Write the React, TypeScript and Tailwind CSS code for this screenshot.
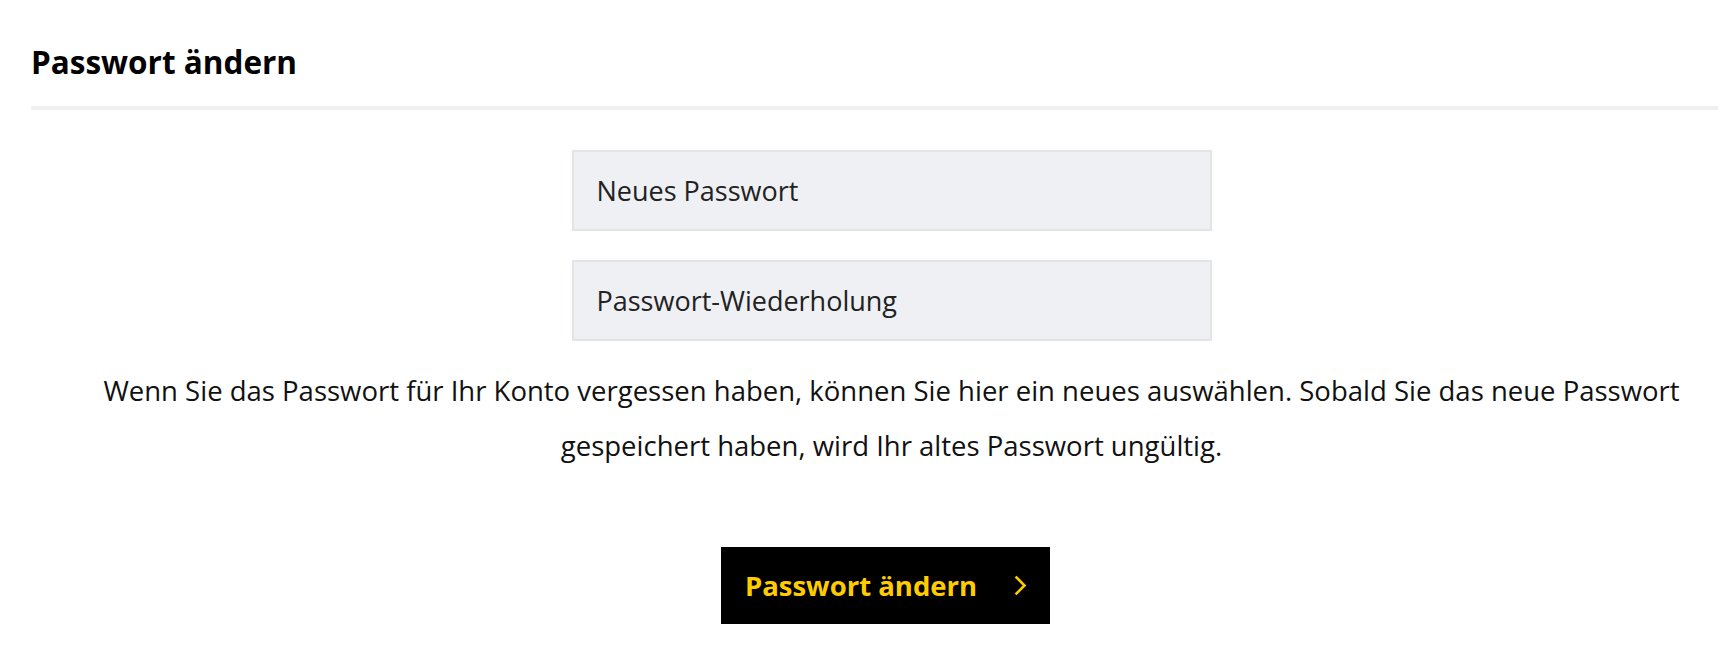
import { useState } from 'react'

function ChevronRight() {
  return (
    <svg width="13" height="21" viewBox="0 0 13 21" fill="none" className="shrink-0">
      <polyline points="2.5,2.5 10.5,10.5 2.5,18.5" stroke="#ffcc00" strokeWidth="2.6" strokeLinecap="square" />
    </svg>
  )
}

interface FieldProps {
  placeholder: string
  value: string
  onChange: (v: string) => void
}

function PasswordField({ placeholder, value, onChange }: FieldProps) {
  return (
    <input
      type="password"
      value={value}
      onChange={(e) => onChange(e.target.value)}
      placeholder={placeholder}
      className="w-[640px] h-[81px] px-[23px] bg-[#eff0f3] border-2 border-[#e3e4e6] text-[27px] text-[#222] placeholder:text-[#222] outline-none"
    />
  )
}

export default function App() {
  const [pw, setPw] = useState('')
  const [pwRepeat, setPwRepeat] = useState('')

  return (
    <div className="min-h-[653px] bg-white text-black" style={{ fontFamily: '"Open Sans", "Noto Sans", sans-serif' }}>
      {/* Header */}
      <div className="pl-[31px] pt-[47px]">
        <h1 className="text-[31.5px] leading-[30px] font-bold">Passwort ändern</h1>
        <div className="mt-[29px] h-[4px] bg-[#f0f0f2]" />
      </div>

      {/* Form */}
      <form className="pl-[65px] flex flex-col items-center" onSubmit={(e) => e.preventDefault()}>
        <div className="mt-[40px] flex flex-col gap-[29px]">
          <PasswordField placeholder="Neues Passwort" value={pw} onChange={setPw} />
          <PasswordField placeholder="Passwort-Wiederholung" value={pwRepeat} onChange={setPwRepeat} />
        </div>

        <p className="mt-[22px] text-center text-[27.5px] leading-[55px] text-[#111]">
          Wenn Sie das Passwort für Ihr Konto vergessen haben, können Sie hier ein neues auswählen. Sobald Sie das neue Passwort gespeichert haben, wird Ihr altes Passwort ungültig.
        </p>

        <button
          type="submit"
          className="mt-[74px] mr-[12px] h-[77px] pl-[24px] pr-[23px] bg-black flex items-center gap-[37px] text-[#ffcc00] text-[27.5px] font-bold"
        >
          Passwort ändern
          <ChevronRight />
        </button>
      </form>
    </div>
  )
}
